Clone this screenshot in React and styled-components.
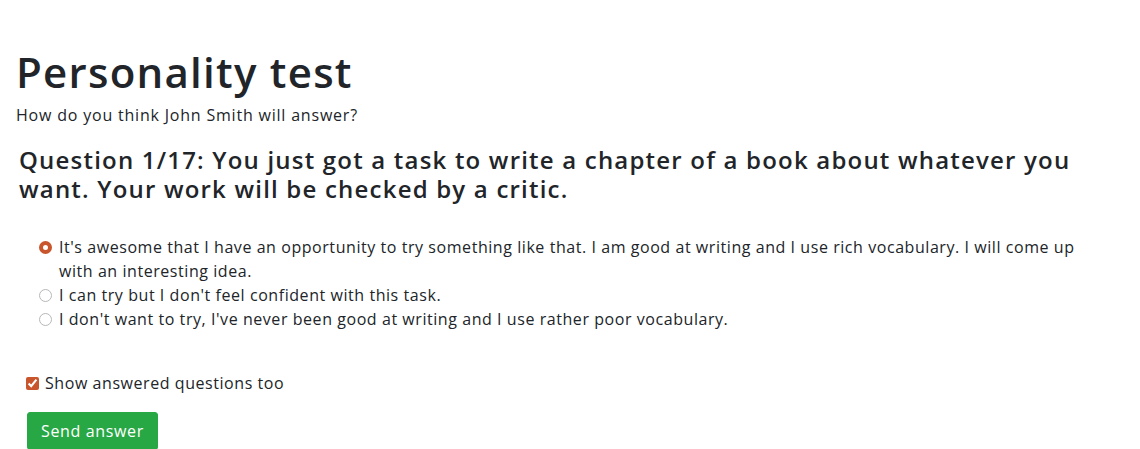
import { createGlobalStyle, styled } from 'styled-components';

const GlobalStyle = createGlobalStyle`
  body {
    margin: 0;
    background: #fff;
    color: #212529;
    font-family: 'Open Sans', 'Liberation Sans', sans-serif;
    letter-spacing: 0.035em;
  }
`;

const Page = styled.main`
  padding: 40px 40px 0 16px;
`;

const Title = styled.h1`
  margin: 0;
  font-size: 42px;
  font-weight: 600;
  line-height: 64px;
  letter-spacing: 0.03em;
`;

const Subtitle = styled.p`
  margin: 0 0 19px;
  font-size: 16px;
  line-height: 22px;
  letter-spacing: 0.05em;
`;

const Question = styled.h4`
  margin: 0 0 32px 3px;
  font-size: 24px;
  font-weight: 600;
  line-height: 29px;
  letter-spacing: 0.05em;
`;

const Options = styled.div`
  display: flex;
  flex-direction: column;
  padding-left: 22px;
`;

const Option = styled.label`
  display: flex;
  align-items: flex-start;
  gap: 7px;
  font-size: 16px;
  line-height: 24px;
`;

const Radio = styled.input`
  appearance: none;
  box-sizing: border-box;
  margin: 6px 0 0 1px;
  width: 13px;
  height: 13px;
  flex: none;
  border: 1px solid #b8b8b8;
  border-radius: 50%;
  background: #fff;

  &:checked {
    border: 4px solid #c8552b;
  }
`;

const CheckRow = styled.label`
  display: flex;
  align-items: center;
  gap: 6px;
  margin: 40px 0 17px 10px;
  font-size: 16px;
  line-height: 24px;
`;

const Check = styled.input`
  margin: 0;
  width: 13px;
  height: 13px;
  accent-color: #c8552b;
`;

const SendButton = styled.button`
  margin-left: 11px;
  padding: 6px 13px;
  background: #28a745;
  border: 1px solid #28a745;
  border-radius: 3px;
  color: #fff;
  font-family: inherit;
  font-size: 16px;
  line-height: 24px;
  letter-spacing: 0.04em;
  cursor: pointer;
`;

const answers = [
  "It's awesome that I have an opportunity to try something like that. I am good at writing and I use rich vocabulary. I will come up with an interesting idea.",
  "I can try but I don't feel confident with this task.",
  "I don't want to try, I've never been good at writing and I use rather poor vocabulary.",
];

export default function App() {
  return (
    <>
      <GlobalStyle />
      <Page>
        <Title>Personality test</Title>
        <Subtitle>How do you think John Smith will answer?</Subtitle>
        <Question>
          Question 1/17: You just got a task to write a chapter of a book about whatever you want. Your work will be
          checked by a critic.
        </Question>
        <Options>
          {answers.map((text, i) => (
            <Option key={i}>
              <Radio type="radio" name="answer" defaultChecked={i === 0} />
              <span>{text}</span>
            </Option>
          ))}
        </Options>
        <CheckRow>
          <Check type="checkbox" defaultChecked />
          Show answered questions too
        </CheckRow>
        <SendButton>Send answer</SendButton>
      </Page>
    </>
  );
}
